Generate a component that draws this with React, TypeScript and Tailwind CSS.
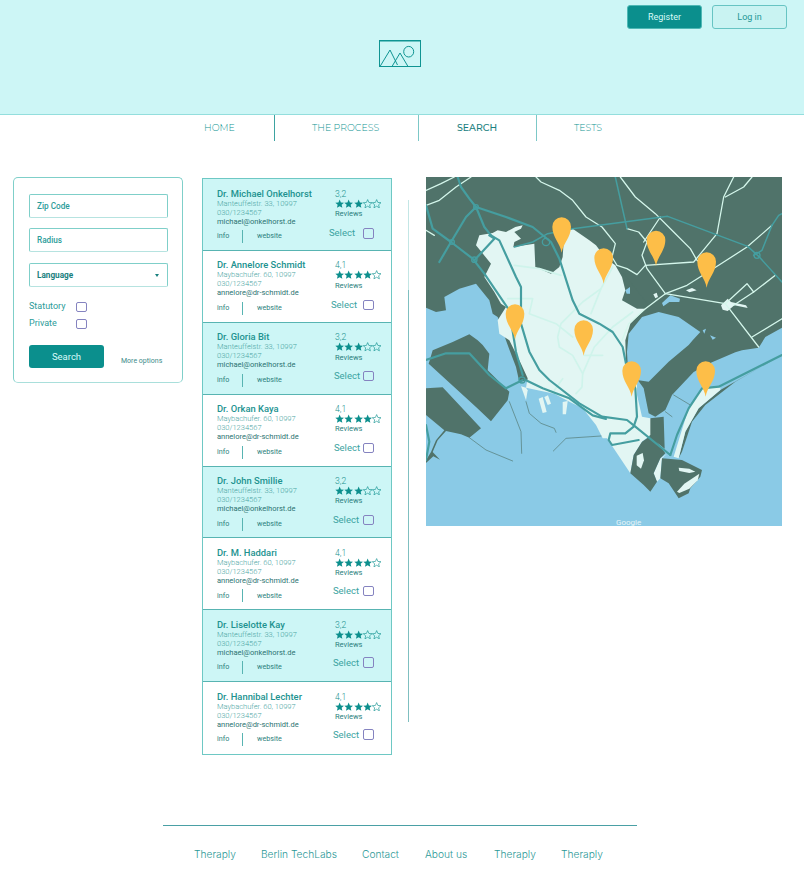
import React from 'react';

const doctors = [
  { name: 'Dr. Michael Onkelhorst', alt: false, selectGap: 'gap-[8px]', selectTop: 'mt-[8.5px]' },
  { name: 'Dr. Annelore Schmidt', alt: true, selectGap: 'gap-[6px]', selectTop: 'mt-[8.5px]' },
  { name: 'Dr. Gloria Bit', alt: false, selectGap: 'gap-[3px]', selectTop: 'mt-[7.5px]' },
  { name: 'Dr. Orkan Kaya', alt: true, selectGap: 'gap-[3px]', selectTop: 'mt-[7.5px]' },
  { name: 'Dr. John Smillie', alt: false, selectGap: 'gap-[4px]', selectTop: 'mt-[7.5px]' },
  { name: 'Dr. M. Haddari', alt: true, selectGap: 'gap-[4px]', selectTop: 'mt-[6.5px]' },
  { name: 'Dr. Liselotte Kay', alt: false, selectGap: 'gap-[4px]', selectTop: 'mt-[6.5px]' },
  { name: 'Dr. Hannibal Lechter', alt: true, selectGap: 'gap-[4px]', selectTop: 'mt-[6.5px]' },
];

const footerLinks = [
  { label: 'Theraply', width: 'w-[42px]' },
  { label: 'Berlin TechLabs', width: 'w-[76px]' },
  { label: 'Contact', width: 'w-[38px]' },
  { label: 'About us', width: 'w-[44px]' },
  { label: 'Theraply', width: 'w-[42px]' },
  { label: 'Theraply', width: 'w-[42px]' },
];

const Star = ({ filled }: { filled: boolean }) => (
  <svg viewBox="0 0 24 24" className="w-[9.3px] h-[9.3px] shrink-0">
    <path
      d="M12 1.5l3.2 7.4 8 .7-6.1 5.3 1.9 7.9L12 18.6l-7 4.2 1.9-7.9L.8 9.6l8-.7z"
      fill={filled ? '#0c8f8d' : 'none'}
      stroke="#0c8f8d"
      strokeWidth={filled ? 0 : 1.6}
    />
  </svg>
);

const Checkbox = () => (
  <span className="block w-[11px] h-[10.5px] rounded-[2px] border border-[#8583c0] shrink-0" />
);

const DoctorCard = ({ doc }: { doc: (typeof doctors)[number] }) => {
  const stars = doc.alt ? 4 : 3;
  return (
    <div className={`flex h-[71.9px] border-b border-[#58b4b2] last:border-b-0 ${doc.alt ? 'bg-white' : 'bg-[#cdf6f6]'}`}>
      <div className="w-[132px] pl-[14px] pt-[8.5px] shrink-0">
        <div className="text-[9.4px] leading-[11px] font-medium text-[#21928f]">{doc.name}</div>
        <div className="text-[7.5px] leading-[9px] font-light text-[#4aa5a3]">
          {doc.alt ? 'Maybachufer. 60, 10997' : 'Manteuffelstr. 33, 10997'}
        </div>
        <div className="text-[7.5px] leading-[9px] font-light text-[#4aa5a3]">030/1234567</div>
        <div className="text-[7.5px] leading-[9px] text-[#2c7472]">
          {doc.alt ? 'annelore@dr-schmidt.de' : 'michael@onkelhorst.de'}
        </div>
        <div className="flex items-center h-[14px] mt-[4px] text-[7.2px] text-[#2c7f7d]">
          <span className="w-[25px]">info</span>
          <span className="w-px h-[13px] bg-[#58b4b2]" />
          <span className="ml-[14px]">website</span>
        </div>
      </div>
      <div className="w-[47px] pt-[9.5px] flex flex-col">
        <div className="text-[8.6px] leading-[10px] font-light text-[#21928f]">{doc.alt ? '4,1' : '3,2'}</div>
        <div className="flex">
          {[0, 1, 2, 3, 4].map((i) => (
            <Star key={i} filled={i < stars} />
          ))}
        </div>
        <div className="text-[7.5px] leading-[10px] mt-[1px] text-[#2c7f7d]">Reviews</div>
        <div className={`flex items-center justify-end w-[39px] ${doc.selectGap} ${doc.selectTop}`}>
          <span className="text-[9.5px] leading-[12px] text-[#3aa3a1]">Select</span>
          <Checkbox />
        </div>
      </div>
    </div>
  );
};

const darkRoads = [
  'M95 0 L105 30 L130 65 L150 90 L175 150 L195 175',
  'M150 90 L240 120 L320 150 L375 195 L400 245 L440 370 L460 410 L520 440 L560 465 L590 510 L600 560 L628 634 L633 719 L623 749 L598 769 L553 769 L548 789 L558 804 L638 789',
  'M0 85 L20 155 L75 195 L140 245 L175 290 L250 400 L270 525 L290 594',
  'M195 175 L220 190 L270 300 L285 330 L285 440 L310 524 L340 579 L370 609 L460 679 L528 719 L603 729 L628 749 L733 834',
  'M40 255 L75 195 L120 120 L150 90',
  'M145 250 L205 185 L190 175',
  'M300 610 L350 634 L430 664 L500 715 L540 726',
  'M0 549 L60 529 L130 529 L190 594 L240 634 L290 609',
  'M733 834 L753 774 L788 694 L828 634 L878 629 L1068 534',
  'M0 744 L10 794 L0 849',
];

const thinTealRoads = [
  'M265 210 L320 195 L365 170 L440 155 L520 145 L725 118 L965 208 L998 238 L1068 315',
  'M1038 145 L1008 220 L983 235',
  'M1038 145 L1058 115 L1068 110',
  'M568 0 L603 155',
];

const lightRoads = [
  'M0 40 L45 20 L85 0',
  'M0 85 L40 70 L90 30 L135 0',
  'M0 160 L25 175',
  'M330 0 L345 15 L400 40 L440 70 L480 120 L528 150 L568 200 L558 240 L573 265 L603 275 L633 293 L658 265 L803 255 L873 170 L893 60 L923 0',
  'M583 0 L628 60 L688 110 L743 165 L793 215 L813 250 L840 270',
  'M603 155 L638 165 L663 195 L648 235 L663 275 L718 350',
  'M703 120 L653 195',
  'M1038 145 L963 210 L878 265 L783 325 L718 350 L658 395 L608 440 L588 490',
  'M718 350 L898 380 L998 510',
  'M898 380 L963 320 L983 345 L923 385',
  'M983 345 L1048 295',
  'M978 480 L1068 425',
  'M898 60 L953 30 L978 0',
];

const cityRoads = [
  'M265 265 L340 275 L405 295',
  'M245 365 L320 365 L310 410 L390 440 L440 480',
  'M525 335 L470 375 L405 440 L395 480 L400 510 L440 535 L470 590 L468 630 L450 650',
  'M560 270 L525 335 L495 410',
  'M620 405 L560 450 L505 510 L470 590',
  'M475 535 L530 535',
  'M410 605 L385 640',
];

const thinLines = [
  'M250 674 L285 764 L287 829',
  'M130 782 L180 819 L260 852',
  'M300 674 L310 709 L345 739 L385 754 L390 766',
  'M382 822 L420 784 L525 777',
  'M743 654 L793 684',
  'M718 704 L738 719',
  'M594 290 L668 385',
];

const pins = [
  [407, 149],
  [533, 242],
  [690, 189],
  [842, 254],
  [267, 410],
  [473, 458],
  [617, 581],
  [839, 581],
];

// styled map redrawn by hand, coordinates are 3x page pixels from the map's corner
const MapDrawing = () => (
  <svg viewBox="0 0 1068 1047" className="block w-[356px] h-[349px] shrink-0">
    <rect width="1068" height="1047" fill="#8acae6" />
    <g fill="#50736a">
      <path d="M0 0 H1068 V452 L1018 480 L998 512 L948 520 L928 526 L858 556 L803 585 L738 654 L718 699 L688 719 L668 709 L653 634 L600 560 L305 610 L280 615 L270 570 L245 504 L215 420 L200 410 L190 370 L150 320 L100 335 L55 360 L60 400 L30 405 L0 392 Z" />
      <path d="M673 724 L713 719 L716 815 L660 770 Z" />
      <path d="M8 560 L20 520 L80 495 L130 472 L155 490 L170 504 L190 530 L185 580 L250 644 L245 670 L195 733 L150 690 Z" />
      <path d="M0 634 L50 631 L165 754 L130 782 L105 772 L60 762 L35 790 L20 825 L42 848 L22 838 L0 858 Z" />
      <path d="M1068 534 L928 614 L838 684 L798 734 L768 824 L758 844 L778 764 L818 694 L883 639 Z" />
    </g>
    <path fill="#8acae6" d="M0 714 L55 760 L30 790 L15 825 L0 850 Z" />
    <g fill="#8acae6">
      <path d="M603 525 L608 470 L648 420 L698 405 L758 420 L823 465 L800 490 L788 504 L728 554 L668 614 L633 609 L605 560 Z" />
      <path d="M598 340 L612 330 L612 350 L602 350 Z" />
      <path d="M708 378 L733 355 L762 365 L760 375 L730 375 L712 388 Z" />
      <path d="M830 460 L840 455 L835 470 Z" />
      <path d="M852 475 L870 482 L860 488 Z" />
    </g>
    <path
      fill="#e2f6f3"
      d="M150 205 L160 175 L200 168 L215 160 L240 165 L268 150 L290 145 L285 155 L265 165 L285 185 L265 195 L262 210 L325 200 L328 270 L375 290 L400 270 L410 240 L415 165 L440 155 L490 190 L510 205 L540 245 L568 265 L588 300 L598 340 L588 370 L633 395 L658 395 L690 370 L700 360 L648 405 L613 440 L598 490 L600 560 L633 624 L633 654 L648 719 L673 724 L673 774 L648 794 L623 834 L613 889 L543 784 L530 784 L510 744 L470 694 L430 674 L385 650 L300 632 L305 604 L285 560 L250 490 L220 470 L215 430 L240 390 L225 380 L205 345 L175 300 L195 260 Z"
    />
    <g fill="#e2f6f3">
      <path d="M285 628 L300 632 L305 640 L300 670 Z" />
      <path d="M338 665 L350 660 L362 705 L350 708 Z" />
      <path d="M355 660 L366 655 L375 680 L365 684 Z" />
      <path d="M410 675 L425 672 L420 712 L410 712 Z" />
      <path d="M883 632 L868 629 L828 634 L788 694 L763 774 L743 839 L758 844 L778 764 L818 694 L883 639 Z" />
      <path d="M723 830 L708 844 L703 904 L693 914 L683 889 L703 844 Z" />
      <path d="M682 352 L692 347 L696 360 L688 364 Z" />
      <path d="M780 340 L798 333 L812 340 L790 346 Z" />
      <path d="M885 385 L905 365 L915 375 L960 385 L965 393 L925 385 L905 402 L890 398 Z" />
    </g>
    <g fill="#50736a">
      <path d="M623 834 L648 794 L678 774 L718 829 L703 844 L683 889 L693 914 L673 944 L653 924 L613 889 Z" />
      <path d="M708 844 L768 849 L828 879 L823 899 L793 934 L788 949 L758 964 L728 919 L703 904 Z" />
    </g>
    <g fill="#e2f6f3">
      <path d="M753 944 L775 920 L820 890 L815 910 L790 935 L760 948 Z" />
      <path d="M758 872 L790 875 L808 884 L790 888 L760 882 Z" />
      <path d="M632 836 L650 828 L654 850 L645 875 L632 865 Z" />
    </g>
    <g fill="none" strokeLinejoin="round" strokeLinecap="round">
      <g stroke="#50736a" strokeWidth="2.2" opacity="0.85">
        {thinLines.map((d) => (
          <path key={d} d={d} />
        ))}
      </g>
      <g stroke="#cff4eb" strokeWidth="5">
        {cityRoads.map((d) => (
          <path key={d} d={d} />
        ))}
      </g>
      <g stroke="#d5f7ec" strokeWidth="3.8">
        {lightRoads.map((d) => (
          <path key={d} d={d} />
        ))}
      </g>
      <g stroke="#459ea0" strokeWidth="4.5">
        {thinTealRoads.map((d) => (
          <path key={d} d={d} />
        ))}
      </g>
      <g stroke="#459ea0" strokeWidth="6.5">
        {darkRoads.map((d) => (
          <path key={d} d={d} />
        ))}
      </g>
      <g stroke="#459ea0" strokeWidth="4">
        <circle cx="360" cy="195" r="11" />
        <circle cx="145" cy="248" r="8" />
        <circle cx="78" cy="195" r="7" />
        <circle cx="150" cy="90" r="7" />
        <circle cx="993" cy="235" r="9" />
        <circle cx="288" cy="609" r="9" />
      </g>
    </g>
    {pins.map(([x, y]) => (
      <path
        key={x}
        fill="#fdbe48"
        d={`M${x} ${y + 78} C${x - 4} ${y + 50} ${x - 28} ${y + 32} ${x - 28} ${y} A28 28 0 1 1 ${x + 28} ${y} C${x + 28} ${y + 32} ${x + 4} ${y + 50} ${x} ${y + 78} Z`}
      />
    ))}
  </svg>
);

export default function App() {
  return (
    <div className="w-[804px] h-[870px] bg-white overflow-hidden font-['Roboto',sans-serif]">
      <header className="h-[115px] bg-[#cdf6f6] border-b border-[#93dedd]">
        <div className="flex justify-end gap-[10px] pt-[5px] pr-[17px]">
          <button className="w-[75px] h-[24px] pt-px rounded-[3px] bg-[#0b8f8d] border border-[#4eb8b5] text-[9px] text-[#d9fbf9]">
            Register
          </button>
          <button className="w-[75px] h-[24px] pt-px rounded-[3px] bg-[#c9f3f2] border border-[#67c4c3] text-[9px] text-[#1f9896]">
            Log in
          </button>
        </div>
        <div className="flex justify-center mt-[11px] pr-[4px]">
          <svg viewBox="0 0 42 27" className="w-[42px] h-[27px]" fill="none" stroke="#0f9492" strokeWidth="1">
            <rect x="0.5" y="0.5" width="41" height="26" />
            <path d="M0.8 0.8H41.2" strokeWidth="1.6" />
            <path d="M1 26.5L11 10L18.5 25" />
            <path d="M13 26.5L21 13L29 26.5" />
            <ellipse cx="29.7" cy="11.7" rx="5" ry="5.3" />
          </svg>
        </div>
      </header>

      <nav className="flex h-[26px] text-[9.4px] font-['Montserrat','Inter',sans-serif] font-light text-[#0f9492]">
        <div className="w-[275px] pl-[204px] flex items-center border-r border-[#3da3a1]">HOME</div>
        <div className="w-[144px] pl-[37px] flex items-center border-r border-[#7cc8c7]">THE PROCESS</div>
        <div className="w-[117.5px] pl-[38px] flex items-center border-r border-[#7cc8c7] font-medium text-[#19807e]">SEARCH</div>
        <div className="pl-[37.5px] flex items-center">TESTS</div>
      </nav>

      <main className="flex items-start pt-[36px] pl-[13px]">
        <section className="w-[170px] h-[206px] shrink-0 rounded-[5px] border border-[#7fcfc9] border-b-[#a9dfdb] pt-[16px] pl-[15px] pr-[14px]">
          <div className="h-[24px] rounded-[2px] border border-[#7fcfc9] border-b-[#b6e3e0] flex items-center pl-[7px] text-[8.2px] font-medium text-[#2c9c9a]">
            Zip Code
          </div>
          <div className="h-[24px] mt-[10px] rounded-[2px] border border-[#7fcfc9] border-b-[#b6e3e0] flex items-center pl-[7px] text-[8.2px] font-medium text-[#2c9c9a]">
            Radius
          </div>
          <div className="h-[24px] mt-[11px] rounded-[2px] border border-[#7fcfc9] border-b-[#b6e3e0] flex items-center justify-between px-[7px] pt-px text-[8.2px] font-bold text-[#19807e]">
            Language
            <span className="w-0 h-0 mr-[1px] border-x-[2.5px] border-x-transparent border-t-[3px] border-t-[#19807e]" />
          </div>
          <div className="flex items-center h-[12px] mt-[14px] text-[9px] text-[#2c9c9a]">
            <span className="w-[47px]">Statutory</span>
            <Checkbox />
          </div>
          <div className="flex items-center h-[12px] mt-[5px] text-[9px] text-[#2c9c9a]">
            <span className="w-[47px]">Private</span>
            <Checkbox />
          </div>
          <div className="flex items-end mt-[15px]">
            <button className="w-[75px] h-[23px] pt-px rounded-[3px] bg-[#0b8f8d] text-[9.5px] text-[#d9fbf9]">Search</button>
            <span className="ml-[17px] mb-[3px] text-[7px] leading-[8px] text-[#3c8b89]">More options</span>
          </div>
        </section>

        <section className="ml-[19px] w-[190px] shrink-0 border border-[#6ec8c4] mt-[1px]">
          {doctors.map((doc) => (
            <DoctorCard key={doc.name} doc={doc} />
          ))}
        </section>

        <div className="ml-[16px] mt-[23px] w-px shrink-0 flex flex-col">
          <div className="h-[90px] bg-[#c3e6e5]" />
          <div className="h-[432px] bg-[#7fbfc0]" />
        </div>

        <div className="ml-[17px] relative">
          <MapDrawing />
          <span className="absolute left-[190px] bottom-[-2px] text-[8px] leading-[10px] text-[#e8f6f8]">Google</span>
        </div>
      </main>

      <footer className="mt-[70px] ml-[163px] w-[474px] border-t border-[#4aa0a5]">
        <div className="flex justify-center gap-[25px] pt-[21px] pr-[3px] text-[10.2px] leading-[14px] font-light font-['Inter',sans-serif] text-[#2a9896]">
          {footerLinks.map((link, i) => (
            <span key={i} className={`${link.width} whitespace-nowrap`}>
              {link.label}
            </span>
          ))}
        </div>
      </footer>
    </div>
  );
}
